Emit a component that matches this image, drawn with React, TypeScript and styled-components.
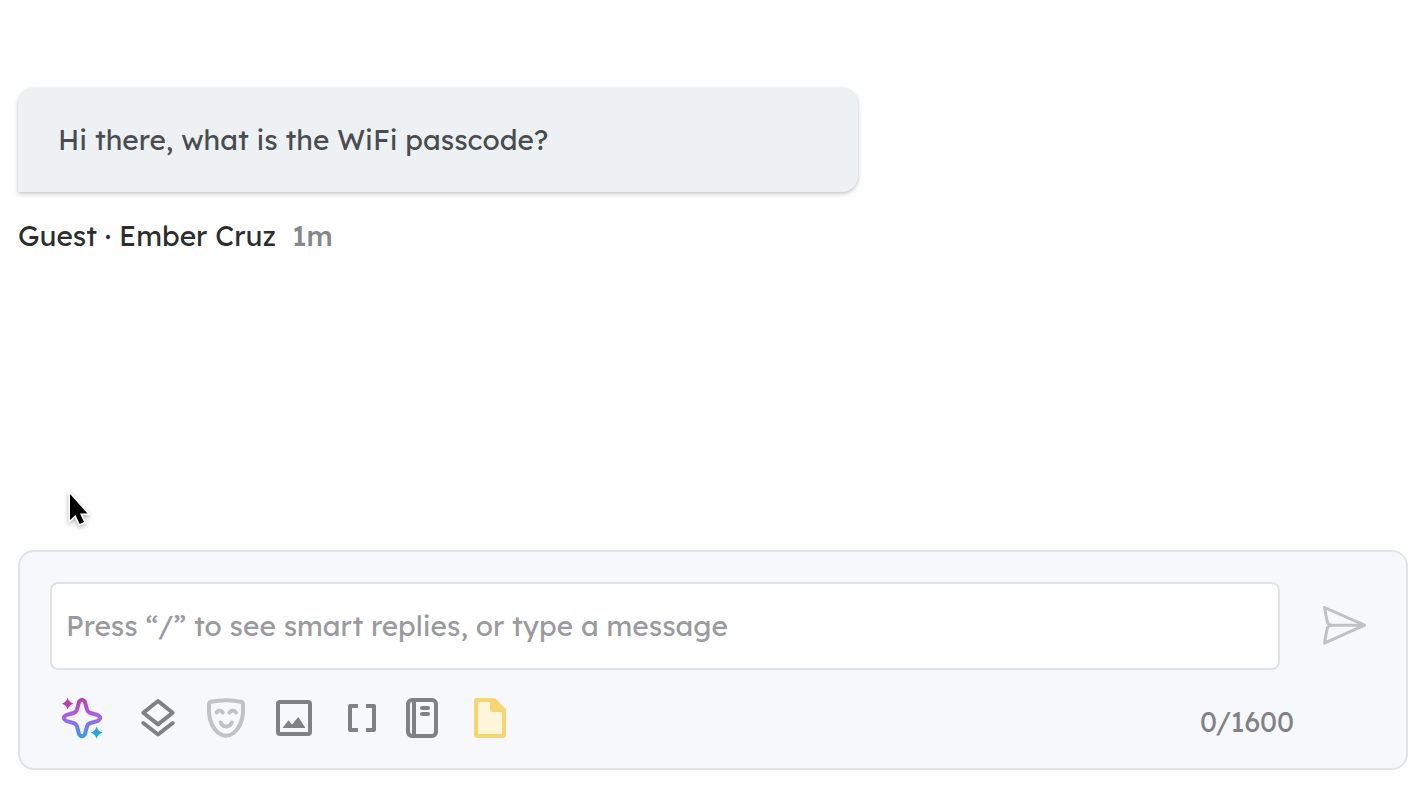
import React, { useState } from "react";
import styled, { createGlobalStyle } from "styled-components";

const GlobalStyle = createGlobalStyle`
  *, *::before, *::after { box-sizing: border-box; }
  body {
    margin: 0;
    background: #fefefe;
    font-family: Lexend, Inter, "Liberation Sans", sans-serif;
    font-size: 28px;
    line-height: 36px;
  }
  button, input { font: inherit; }
`;

const Page = styled.div`
  position: relative;
  display: flex;
  flex-direction: column;
  justify-content: space-between;
  gap: 48px;
  min-height: 100vh;
  padding: 88px 20px 28px 18px;
`;

const Thread = styled.main`
  display: flex;
  flex-direction: column;
  gap: 26px;
`;

const Bubble = styled.p`
  width: 100%;
  max-width: 840px;
  margin: 0;
  padding: 34px 40px;
  border-radius: 16px 16px 16px 0;
  background: #edf1f4;
  color: #4a4d50;
  box-shadow: 0 2px 4px rgba(0, 0, 0, 0.2), 0 0 2px rgba(0, 0, 0, 0.08);
`;

const Byline = styled.div`
  display: flex;
  gap: 16px;
  color: #2c2d2f;
`;

const Age = styled.time`
  color: #85878b;
  font-weight: 500;
`;

const Composer = styled.form`
  padding: 30px 38px 26px 30px;
  border: 2px solid #e1e3e7;
  border-radius: 16px;
  background: #f6f8fc;
`;

const EntryRow = styled.div`
  display: flex;
  align-items: center;
  gap: 40px;
`;

const MessageInput = styled.input`
  flex: 1;
  min-width: 0;
  height: 88px;
  padding: 0 14px 2px;
  border: 2px solid #e1e2e6;
  border-radius: 8px;
  background: #fff;
  color: #4a4d50;
  outline: none;
  &::placeholder { color: #999b9e; opacity: 1; }
`;

const IconButton = styled.button<{ $wide?: boolean }>`
  display: flex;
  flex: none;
  align-items: center;
  justify-content: center;
  width: ${(p) => (p.$wide ? 64 : 48)}px;
  height: 48px;
  padding: 0;
  border: 0;
  background: none;
  color: #7f8185;
  cursor: pointer;
`;

const Icon = styled.svg`
  display: block;
  width: 48px;
  height: 48px;
  fill: none;
`;

const Toolbar = styled.div`
  display: flex;
  align-items: center;
  gap: 12px;
  margin-top: 24px;
  padding-right: 74px;
`;

const ToolGroup = styled.div`
  display: flex;
  gap: 20px;
`;

const Counter = styled.output`
  margin-left: auto;
  padding-top: 8px;
  color: #808286;
`;

const Pointer = styled.svg`
  position: absolute;
  left: 64px;
  top: 488px;
  width: 32px;
  height: 44px;
  pointer-events: none;
  filter: drop-shadow(0 2px 2px rgba(0, 0, 0, 0.3));
`;

const MAX_LENGTH = 1600;

export default function App() {
  const [message, setMessage] = useState("");

  return (
    <>
      <GlobalStyle />
      <Page>
        <Thread>
          <Bubble>Hi there, what is the WiFi passcode?</Bubble>
          <Byline>
            <span>Guest · Ember Cruz</span>
            <Age>1m</Age>
          </Byline>
        </Thread>

        <Composer onSubmit={(e) => e.preventDefault()}>
          <EntryRow>
            <MessageInput
              aria-label="Message"
              placeholder="Press “/” to see smart replies, or type a message"
              maxLength={MAX_LENGTH}
              value={message}
              onChange={(e) => setMessage(e.target.value)}
            />
            <IconButton type="submit" aria-label="Send">
              <Icon viewBox="0 0 48 48" stroke="#bfc1c4" strokeWidth="3" strokeLinejoin="round" strokeLinecap="round">
                <path d="M4.500 5.500 44.500 23.200 4.500 41.200 7 27Q7.600 23.800 11 23.200Q7.800 22.700 7.200 19.500Z" />
                <path d="M11 23.200H44" />
              </Icon>
            </IconButton>
          </EntryRow>

          <Toolbar>
            <ToolGroup>
              <IconButton type="button" $wide aria-label="Write with AI">
                <Icon viewBox="0 0 48 48">
                  <defs>
                    <linearGradient id="spark" gradientUnits="userSpaceOnUse" x1="24" y1="4" x2="24" y2="44">
                      <stop offset="0" stopColor="#c03cb0" />
                      <stop offset="0.5" stopColor="#a265e8" />
                      <stop offset="1" stopColor="#369ee4" />
                    </linearGradient>
                  </defs>
                  <path
                    d="M21.200 7.500Q24 4 26.800 7.500L29 15.500Q29.800 18.200 32.500 19L40 21.200Q44.500 24 40 26.800L32.500 29Q29.800 29.800 29 32.500L26.800 40.500Q24 44 21.200 40.500L19 32.500Q18.200 29.800 15.500 29L8 26.800Q3.500 24 8 21.200L15.500 19Q18.200 18.200 19 15.500Z"
                    stroke="url(#spark)"
                    strokeWidth="4"
                    strokeLinejoin="round"
                  />
                  <path d="M9.700 3.800Q11 8.400 15.700 9.700Q11 11 9.700 15.600Q8.400 11 3.800 9.700Q8.400 8.400 9.700 3.800Z" fill="#bd3fae" />
                  <path d="M38.600 32.400Q40 37.100 44.700 38.500Q40 39.900 38.600 44.600Q37.200 39.900 32.500 38.500Q37.200 37.100 38.600 32.400Z" fill="#20a9dc" />
                </Icon>
              </IconButton>
              <IconButton type="button" aria-label="Templates">
                <Icon viewBox="0 0 48 48" stroke="currentColor" strokeWidth="4" strokeLinejoin="round" strokeLinecap="round">
                  <path d="M24 7 38.700 18.700 24 30.400 9.300 18.700Z" />
                  <path d="M9.300 29 24 40.500 38.700 29" />
                </Icon>
              </IconButton>
              <IconButton type="button" aria-label="Tone">
                <Icon viewBox="0 0 48 48" stroke="#c1c2c4" strokeWidth="4" strokeLinejoin="round" strokeLinecap="round">
                  <path d="M9 7.800Q24 4.500 39 7.800Q41 8.300 41 10.300V19Q40 32 31.500 39Q24 44.500 16.500 39Q8 32 7 19V10.300Q7 8.300 9 7.800Z" />
                  <path d="M14.500 18.500Q17.500 14.500 20.800 18.500M27.500 18.500Q30.700 14.500 34 18.500M18.800 28.500Q20 32.500 24.300 32.500Q28.500 32.500 29.800 28.500" />
                </Icon>
              </IconButton>
              <IconButton type="button" aria-label="Insert image">
                <Icon viewBox="0 0 48 48">
                  <rect x="8" y="8" width="32" height="32" rx="2" stroke="currentColor" strokeWidth="4" />
                  <path d="M12.500 34 18.500 26.300 22 30.500 28.300 23 35.500 34Z" fill="currentColor" />
                </Icon>
              </IconButton>
              <IconButton type="button" aria-label="Insert variable">
                <Icon viewBox="0 0 48 48" stroke="currentColor" strokeWidth="4" strokeLinejoin="round">
                  <path d="M20 12H12V36H20M28 12H36V36H28" />
                </Icon>
              </IconButton>
            </ToolGroup>
            <ToolGroup>
              <IconButton type="button" aria-label="Guidebook">
                <Icon viewBox="0 0 48 48" stroke="currentColor" strokeWidth="4">
                  <rect x="10" y="6" width="28" height="36" rx="4" />
                  <path d="M16 6V42" />
                  <path d="M24 14H30M24 20H30" strokeLinecap="round" />
                </Icon>
              </IconButton>
              <IconButton type="button" aria-label="Note">
                <Icon viewBox="0 0 48 48" stroke="#f9d570" strokeWidth="4" strokeLinejoin="round">
                  <path d="M11 6H27L38 17V41Q38 42 37 42H11Q10 42 10 41V7Q10 6 11 6Z" fill="#fff5db" />
                  <path d="M26 6V16H38L28 6Z" fill="#f9d570" />
                </Icon>
              </IconButton>
            </ToolGroup>
            <Counter>
              {message.length}/{MAX_LENGTH}
            </Counter>
          </Toolbar>
        </Composer>

        <Pointer viewBox="0 0 32 44" aria-hidden="true">
          <path
            d="M6 6V32L11.500 27 15.700 36 20 34 16 25.500H23.500Z"
            fill="#000"
            stroke="#fff"
            strokeWidth="3"
            paintOrder="stroke"
          />
        </Pointer>
      </Page>
    </>
  );
}
